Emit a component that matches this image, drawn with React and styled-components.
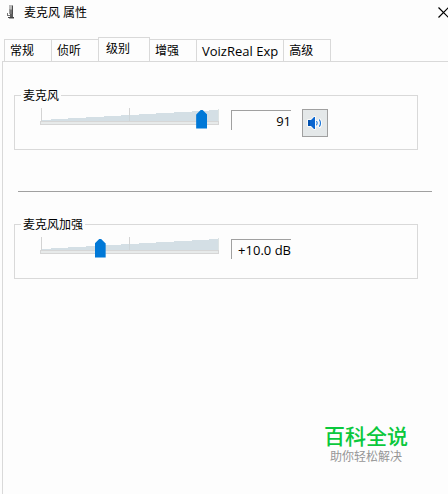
import React, { useState } from 'react'
import styled, { createGlobalStyle } from 'styled-components'

const GlobalStyle = createGlobalStyle`
    * {
        box-sizing: border-box;
    }
    body {
        margin: 0;
        background: #fdfdfd;
        color: #000;
        font: 12px/16px "Open Sans", "Noto Sans CJK SC", sans-serif;
        overflow: hidden;
    }
    button, input {
        font: inherit;
        color: inherit;
    }
`

const Window = styled.div`
    display: flex;
    flex-direction: column;
    min-height: 100vh;
`
const TitleBar = styled.header`
    display: flex;
    align-items: center;
    gap: 8px;
    height: 25px;
    padding-left: 6px;
    overflow: hidden;
`
const Title = styled.h1`
    flex: 1;
    margin: 0;
    font-size: 12px;
    font-weight: 400;
`
const CloseBtn = styled.button`
    display: flex;
    width: 10px;
    padding: 0;
    border: 0;
    background: none;
`
const CloseIcon = styled.svg`
    flex: none;
`
const TabList = styled.div`
    display: flex;
    align-items: flex-end;
    height: 25px;
    margin: 12px 0 -1px 4px;
`
const Tab = styled.button`
    flex: none;
    min-width: ${(props) => (props.$active ? 52 : 48)}px;
    height: ${(props) => (props.$active ? 25 : 23)}px;
    padding: ${(props) => (props.$active ? '0 7px 2px' : '0 5px')};
    border: 1px solid #d9d9d9;
    border-bottom-color: ${(props) => (props.$active ? '#fdfdfd' : '#d9d9d9')};
    background: #fdfdfd;
    font-size: ${(props) => (props.$latin ? 13 : 12)}px;
    text-align: left;
    white-space: nowrap;

    & + & {
        margin-left: -1px;
    }
`
const Panel = styled.main`
    flex: 1;
    display: flex;
    flex-direction: column;
    margin-left: 2px;
    padding: 25px 16px 30px 11px;
    border: solid #d9d9d9;
    border-width: 1px 0 0 1px;
`
const Group = styled.fieldset`
    display: flex;
    align-items: flex-start;
    min-width: 0;
    height: 63px;
    margin: 0 14px 0 0;
    padding: 5px 0 0 21px;
    border: 1px solid #d9d9d9;
`
const Legend = styled.legend`
    margin-left: -15px;
    padding: 2px 2px 0;
    line-height: 14px;
`
const Divider = styled.hr`
    width: calc(100% - 4px);
    margin: 41px 0 24px 4px;
    border: 0;
    border-top: 1px solid #a0a0a0;
`
const SliderBox = styled.div`
    display: grid;
    width: 187px;

    & > * {
        grid-area: 1 / 1;
    }
`
const Scale = styled.svg`
    margin-left: 4px;
`
const Range = styled.input`
    appearance: none;
    width: 100%;
    height: 20px;
    margin: 1px 0 0;
    background: none;

    &::-webkit-slider-thumb {
        appearance: none;
        width: 11px;
        height: 19px;
        background: #0078d7;
        clip-path: polygon(0 5px, 5px 0, 6px 0, 11px 5px, 11px 100%, 0 100%);
    }
`
const ValueBox = styled.input`
    width: 60px;
    height: 20px;
    margin: 2px 0 0 8px;
    padding: 0;
    border: solid #a0a0a0;
    border-width: 1px 0 0 1px;
    background: #fdfdfd;
    font-size: 13px;
    line-height: 16px;
    text-align: right;
    outline: none;
`
const MuteBtn = styled.button`
    display: grid;
    place-items: center;
    width: 26px;
    height: 28px;
    margin: 1px 0 0 11px;
    padding: 0;
    border: 1px solid #a0a0a0;
    background: #e4e8e9;
`
const Brand = styled.footer`
    align-self: flex-end;
    margin-top: auto;
    margin-right: 24px;
    text-align: center;
`
const BrandName = styled.strong`
    display: block;
    color: #0bc83c;
    font: 500 21px/26px "Noto Sans CJK SC", sans-serif;
`
const Slogan = styled.span`
    display: block;
    color: #969696;
    font: 12px/16px "Noto Sans CJK SC", sans-serif;
`

const tabs = ['常规', '侦听', '级别', '增强', 'VoizReal Exp', '高级']

function MicIcon() {
    return (
        <svg width="10" height="15" viewBox="0 0 10 15" shapeRendering="crispEdges" aria-hidden="true">
            <path d="M3 0h4v9H3z" fill="#9a9a9a" />
            <path d="M3 0h3v4H3z" fill="#b9b9b9" />
            <path d="M6 1h1v9H6z" fill="#4b4b4b" />
            <path d="M4 5h2v4H4z" fill="#777" />
            <path d="M1 8h1v2h2v1H1z" fill="#777" />
            <path d="M4 9h3v3H4z" fill="#5c5c5c" />
            <path d="M2 12h6v1H2z" fill="#444" />
            <path d="M3 13h5v1H3z" fill="#a5a5a5" />
        </svg>
    )
}

function SpeakerIcon() {
    return (
        <svg width="16" height="16" viewBox="0 0 16 16" aria-hidden="true">
            <path d="M1 5h3l3-3h1v12H7l-3-3H1z" fill="#fff" stroke="#fff" strokeWidth="1.500" />
            <path d="M9 5.500q2 2.800 0 5.600M12 4q3 4.300 0 8.600" fill="none" stroke="#fff" strokeWidth="3" />
            <path d="M1 5h3l3-3h1v12H7l-3-3H1z" fill="#0a66d0" />
            <path d="M1 5h2v6H1z" fill="#0050ae" />
            <path d="M9.500 6q1.600 2.200 0 4.400M12.300 4.500q2.400 3.600 0 7.200" fill="none" stroke="#1c77d8" strokeWidth="1.200" />
        </svg>
    )
}

function LevelSlider({ label, value, max, onChange }) {
    return (
        <SliderBox>
            <Scale width="179" height="18" viewBox="0 0 179 18" shapeRendering="crispEdges" aria-hidden="true">
                <path d="M1.500 0v13M89.500 0v13" stroke="#d3d3d3" />
                <path d="M2 12L178 2V13H2z" fill="#d4dfe5" />
                <path d="M89.500 7v6" stroke="#cdd5d9" />
                <path d="M178.500 1v12" stroke="#dde4e4" />
                <path d="M.5 13.500h178v3H.5z" fill="#e7eaea" stroke="#d6d6d6" />
            </Scale>
            <Range
                type="range"
                aria-label={label}
                min="0"
                max={max}
                value={value}
                onChange={(e) => onChange(Number(e.target.value))}
            />
        </SliderBox>
    )
}

export default function App() {

    const [tab, setTab] = useState('级别')
    const [level, setLevel] = useState(91)
    const [boost, setBoost] = useState(10)
    const [muted, setMuted] = useState(false)

  return (
    <>
        <GlobalStyle/>

        <Window>
            <TitleBar>
                <MicIcon/>
                <Title>麦克风 属性</Title>
                <CloseBtn aria-label="关闭">
                    <CloseIcon width="11" height="11" viewBox="0 0 11 11">
                        <path d="M.5 .5l10 10M10.500 .5l-10 10" stroke="#000" strokeWidth="1.200" />
                    </CloseIcon>
                </CloseBtn>
            </TitleBar>

            <TabList role="tablist">
                {tabs.map((name) => (
                    <Tab
                        key={name}
                        role="tab"
                        aria-selected={tab === name}
                        $active={tab === name}
                        $latin={/^[A-Z]/.test(name)}
                        onClick={() => setTab(name)}
                    >
                        {name}
                    </Tab>
                ))}
            </TabList>

            <Panel>
                <Group>
                    <Legend>麦克风</Legend>
                    <LevelSlider label="麦克风" value={level} max={100} onChange={setLevel}/>
                    <ValueBox aria-label="麦克风" value={level} readOnly/>
                    <MuteBtn aria-label="静音" aria-pressed={muted} onClick={() => setMuted(!muted)}>
                        <SpeakerIcon/>
                    </MuteBtn>
                </Group>

                <Divider/>

                <Group>
                    <Legend>麦克风加强</Legend>
                    <LevelSlider label="麦克风加强" value={boost} max={30} onChange={setBoost}/>
                    <ValueBox aria-label="麦克风加强" value={`+${boost.toFixed(1)} dB`} readOnly/>
                </Group>

                <Brand>
                    <BrandName>百科全说</BrandName>
                    <Slogan>助你轻松解决</Slogan>
                </Brand>
            </Panel>
        </Window>
    </>
  )
}
